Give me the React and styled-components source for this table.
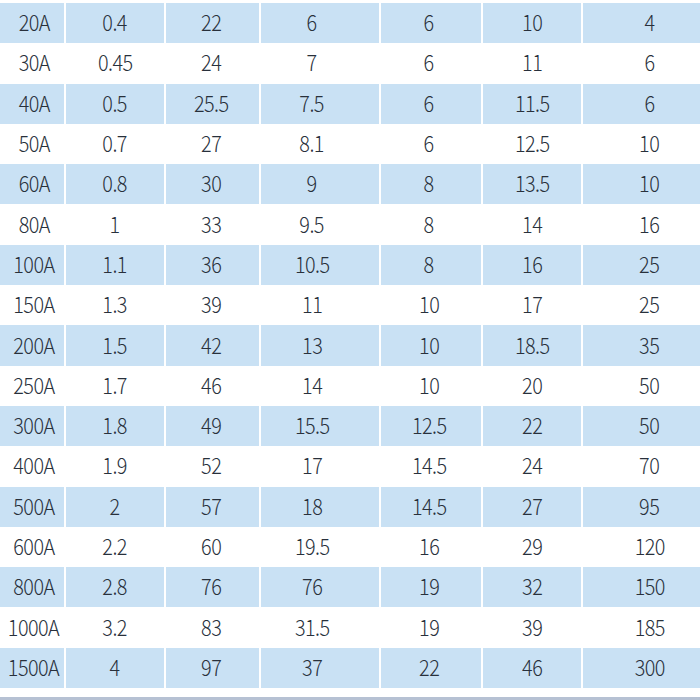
import styled, { createGlobalStyle } from "styled-components";

const GlobalStyle = createGlobalStyle`
  html, body {
    margin: 0;
    padding: 0;
    background: #ffffff;
  }
  body {
    font-family: "Noto Sans CJK SC", "Noto Sans", sans-serif;
  }
`;

const rows = [
  ["20A", "0.4", "22", "6", "6", "10", "4"],
  ["30A", "0.45", "24", "7", "6", "11", "6"],
  ["40A", "0.5", "25.5", "7.5", "6", "11.5", "6"],
  ["50A", "0.7", "27", "8.1", "6", "12.5", "10"],
  ["60A", "0.8", "30", "9", "8", "13.5", "10"],
  ["80A", "1", "33", "9.5", "8", "14", "16"],
  ["100A", "1.1", "36", "10.5", "8", "16", "25"],
  ["150A", "1.3", "39", "11", "10", "17", "25"],
  ["200A", "1.5", "42", "13", "10", "18.5", "35"],
  ["250A", "1.7", "46", "14", "10", "20", "50"],
  ["300A", "1.8", "49", "15.5", "12.5", "22", "50"],
  ["400A", "1.9", "52", "17", "14.5", "24", "70"],
  ["500A", "2", "57", "18", "14.5", "27", "95"],
  ["600A", "2.2", "60", "19.5", "16", "29", "120"],
  ["800A", "2.8", "76", "76", "19", "32", "150"],
  ["1000A", "3.2", "83", "31.5", "19", "39", "185"],
  ["1500A", "4", "97", "37", "22", "46", "300"],
];

// horizontal nudge of the text inside each column
const shift = [2, 0, -1, -8, -2, 0, 8];

const Page = styled.div`
  width: 700px;
  height: 700px;
  overflow: hidden;
  display: flex;
  flex-direction: column;
  background: #ffffff;
`;

const Table = styled.div`
  margin-top: 3px;
  display: flex;
  flex-direction: column;
`;

const Row = styled.div`
  display: grid;
  grid-template-columns: 64px 98px 93px 118px 100px 98px 1fr;
  column-gap: 2px;
  height: 40.3px;
  background: #ffffff;
`;

const Cell = styled.div`
  display: flex;
  align-items: center;
  justify-content: center;
  background: ${(p) => (p.$shaded ? "#c9e1f4" : "#ffffff")};
  color: #28303b;
  font-size: 22px;
  font-weight: 300;
  letter-spacing: -0.6px;
  line-height: 1;
  padding-bottom: 4px;
  span {
    display: inline-block;
    transform: translateX(${(p) => p.$shift}px) scaleX(0.9);
  }
`;

const Footer = styled.div`
  margin-top: auto;
  height: 3px;
  background: #b6c1d3;
`;

export default function App() {
  return (
    <Page>
      <GlobalStyle />
      <Table>
        {rows.map((row, i) => (
          <Row key={row[0]}>
            {row.map((value, c) => (
              <Cell key={c} $shaded={i % 2 === 0} $shift={shift[c]}>
                <span>{value}</span>
              </Cell>
            ))}
          </Row>
        ))}
      </Table>
      <Footer />
    </Page>
  );
}
